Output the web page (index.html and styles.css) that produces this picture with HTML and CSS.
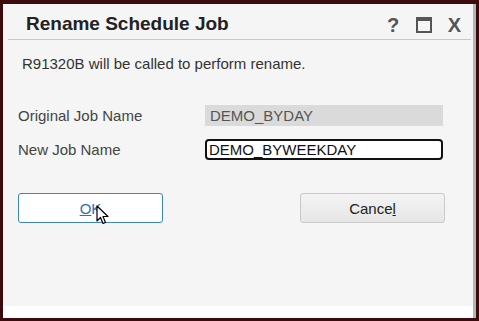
FILE: index.html
```html
<!DOCTYPE html>
<html>
<head>
<meta charset="utf-8">
<link rel="stylesheet" href="styles.css">
</head>
<body>
<div class="frame">
  <div class="dialog">
    <div class="titlebar">
      <div class="title">Rename Schedule Job</div>
      <div class="tools">
        <span class="tool help">?</span>
        <span class="tool max"><span class="maxbox"></span></span>
        <span class="tool close">X</span>
      </div>
    </div>
    <div class="body">
      <p class="msg">R91320B will be called to perform rename.</p>
      <div class="rows">
        <div class="row">
          <span class="label">Original Job Name</span>
          <span class="field ro">DEMO_BYDAY</span>
        </div>
        <div class="row">
          <span class="label">New Job Name</span>
          <span class="field edit">DEMO_BYWEEKDAY</span>
        </div>
      </div>
      <div class="buttons">
        <button class="btn ok"><u>O</u>K
          <svg class="cursor" width="13" height="20" viewBox="0 0 13 20"><path d="M1 1 L1 16 L4.5 12.5 L7 18.5 L9.5 17.5 L7 11.5 L12 11.5 Z" fill="#fff" stroke="#000" stroke-width="1.2" stroke-linejoin="round"/></svg>
        </button>
        <button class="btn cancel">Cance<u>l</u></button>
      </div>
    </div>
    <div class="footer"></div>
  </div>
</div>
</body>
</html>
```
FILE: styles.css
```css
html, body {
  margin: 0;
  padding: 0;
}
body {
  width: 479px;
  height: 321px;
  background: #3b0b0d;
  font-family: "Liberation Sans", Arial, sans-serif;
  overflow: hidden;
}
.frame {
  box-sizing: border-box;
  width: 479px;
  height: 321px;
  padding: 4px 3px 3px 3px;
}
.dialog {
  box-sizing: border-box;
  height: 314px;
  background: #f5f5f5;
  border-right: 3px solid #b5b5b5;
  display: flex;
  flex-direction: column;
}
.titlebar {
  height: 35px;
  margin: 0 2px 0 5px;
  border-bottom: 1px solid #c8c8c8;
  display: flex;
  align-items: center;
  justify-content: space-between;
}
.title {
  font-weight: bold;
  font-size: 19px;
  color: #222;
  padding-left: 18px;
  padding-top: 5px;
}
.tools {
  display: flex;
  align-items: center;
  padding-right: 9px;
  padding-top: 7px;
}
.tool {
  color: #555;
  font-weight: bold;
  font-size: 20px;
  display: inline-flex;
  align-items: center;
  justify-content: center;
}
.help { width: 12px; margin-right: 17px; }
.max { width: 16px; height: 16px; margin-right: 15px; }
.maxbox {
  box-sizing: border-box;
  width: 16px;
  height: 16px;
  border: 2px solid #555;
  border-top-width: 4px;
}
.close { width: 15px; font-size: 20px; }
.body {
  padding: 0 0 0 15px;
  flex: 1;
}
.msg {
  margin: 15px 0 0 4px;
  font-size: 15px;
  line-height: 17px;
  color: #333;
}
.rows {
  margin-top: 33px;
  display: flex;
  flex-direction: column;
  gap: 13px;
}
.row {
  display: flex;
  align-items: center;
  height: 21px;
}
.label {
  width: 187px;
  font-size: 15px;
  color: #444;
}
.field {
  box-sizing: border-box;
  width: 238px;
  height: 21px;
  font-size: 15px;
  display: flex;
  align-items: center;
}
.ro {
  background: #dadada;
  color: #555;
  padding-left: 5px;
}
.edit {
  border: 2px solid #111;
  border-radius: 4px;
  background: #fff;
  color: #111;
  padding-left: 2px;
}
.buttons {
  margin-top: 33px;
  display: flex;
  justify-content: space-between;
  width: 427px;
}
.btn {
  position: relative;
  box-sizing: border-box;
  width: 145px;
  height: 30px;
  font-family: "Liberation Sans", Arial, sans-serif;
  font-size: 15px;
  border-radius: 3px;
  padding: 0;
}
.ok {
  background: #fff;
  border: 1px solid #3d84c4;
  color: #2f6fb3;
}
.ok u { text-decoration: underline; }
.cancel {
  background: linear-gradient(#f3f3f3, #e6e6e6);
  border: 1px solid #c9c9c9;
  color: #222;
}
.cursor {
  position: absolute;
  left: 77px;
  top: 11px;
}
.footer {
  height: 12px;
  background: #fff;
}
```
